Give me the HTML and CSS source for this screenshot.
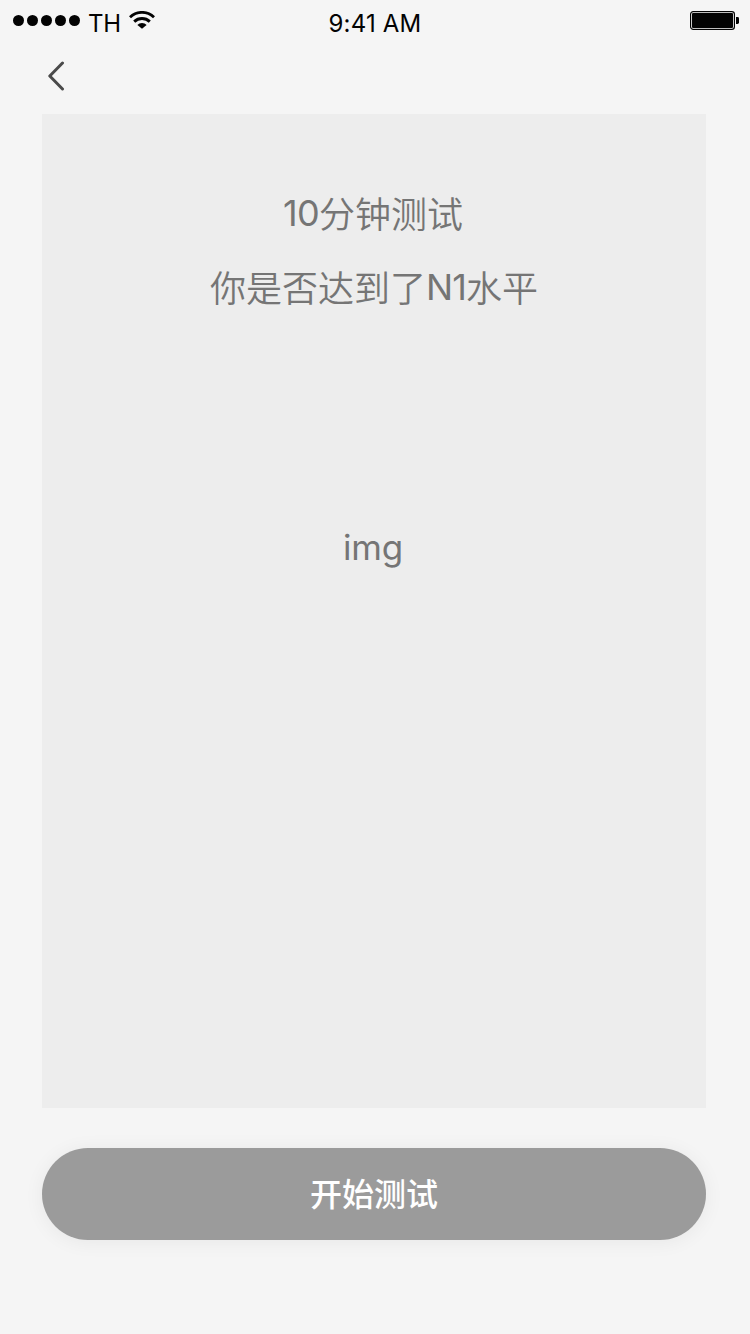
FILE: index.html
```html
<!DOCTYPE html>
<html lang="zh-CN">
<head>
<meta charset="utf-8">
<title>10分钟测试</title>
<link rel="stylesheet" href="styles.css">
</head>
<body>
<div class="screen">
  <header class="status">
    <div class="status-left">
      <span class="signal"><i class="dot"></i><i class="dot"></i><i class="dot"></i><i class="dot"></i><i class="dot"></i></span>
      <span class="carrier">TH</span>
      <svg class="wifi" width="26" height="18" viewBox="0 0 26 18" fill="none" stroke="#030303" stroke-width="2.9">
        <path d="M1 6.2C8 -.2 18 -.2 25 6.2"/>
        <path d="M5.2 10.6C9.6 6.5 16.4 6.5 20.8 10.6"/>
        <path d="M8.4 14C10.5 11.2 15.5 11.2 17.6 14L13 17.8Z" fill="#030303" stroke="none"/>
      </svg>
    </div>
    <time class="clock">9:41 AM</time>
    <div class="status-right">
      <svg width="49" height="20" viewBox="0 0 49 20">
        <rect x=".6" y=".6" width="43.8" height="17.8" rx="2.6" fill="#fff" stroke="#030303" stroke-width="1.2"/>
        <rect x="2" y="2" width="41" height="15" rx="1" fill="#030303"/>
        <path d="M46 6h1.6q1.4 0 1.4 1.4v4.2q0 1.4-1.4 1.4H46z" fill="#030303"/>
      </svg>
    </div>
  </header>
  <nav class="nav">
    <button class="back" aria-label="返回">
      <svg width="18" height="30" viewBox="0 0 18 30" fill="none" stroke="#4a4a4a" stroke-width="3" stroke-linecap="round" stroke-linejoin="round"><path d="M14.5 2L1.8 15L14.5 28"/></svg>
    </button>
  </nav>
  <main class="card">
    <h1 class="title title-first"><span class="num">10</span>分钟测试</h1>
    <p class="title">你是否达到了<span class="level">N1</span>水平</p>
    <p class="image-label">img</p>
  </main>
  <button class="start">开始测试</button>
</div>
</body>
</html>
```
FILE: styles.css
```css
* { box-sizing: border-box; }
body {
  margin: 0;
  background: #f5f5f5;
  font-family: Inter, "Noto Sans CJK SC", sans-serif;
}
button { border: 0; padding: 0; font-family: inherit; }
.screen {
  width: 750px;
  height: 1334px;
  padding-bottom: 94px;
  display: flex;
  flex-direction: column;
  overflow: hidden;
}
.status {
  height: 40px;
  padding: 0 11px 0 13px;
  display: grid;
  grid-template-columns: 1fr auto 1fr;
  color: #030303;
}
.status-left, .signal { display: flex; }
.signal { gap: 3px; padding-top: 15px; }
.dot { width: 11px; height: 11px; border-radius: 50%; background: #030303; }
.carrier {
  width: 32px;
  margin-left: 8px;
  font-size: 24px;
  font-weight: 400;
  line-height: 47px;
  letter-spacing: -0.3px;
}
.wifi { margin: 11px 0 0 9px; }
.clock {
  margin-right: 2px;
  font-size: 24px;
  font-weight: 400;
  line-height: 47px;
  letter-spacing: 0.2px;
}
.status-right { display: flex; justify-content: flex-end; padding-top: 11px; }
.nav { height: 74px; padding: 21px 0 0 48px; }
.back { background: none; display: block; line-height: 0; }
.card {
  height: 994px;
  margin: 0 44px 40px 42px;
  padding-top: 64px;
  background: #ededed;
  color: #757575;
  text-align: center;
}
.title {
  margin: 0;
  font-size: 36px;
  font-weight: 350;
  line-height: 74px;
}
.title-first { padding-right: 2px; }
.num, .level {
  font-weight: 370;
  line-height: 1;
  vertical-align: 2px;
}
.num { letter-spacing: -0.6px; }
.level { letter-spacing: -1px; }
.image-label {
  margin: 184px 2px 0 0;
  font-size: 35px;
  font-weight: 370;
  line-height: 74px;
  letter-spacing: -0.2px;
}
.start {
  height: 92px;
  margin: 0 44px 0 42px;
  padding-top: 2px;
  border-radius: 46px;
  background: #9b9b9b;
  box-shadow: 0 2px 20px rgba(0, 0, 0, 0.06);
  color: #fff;
  font-size: 32px;
  font-weight: 500;
  line-height: 90px;
}
```
